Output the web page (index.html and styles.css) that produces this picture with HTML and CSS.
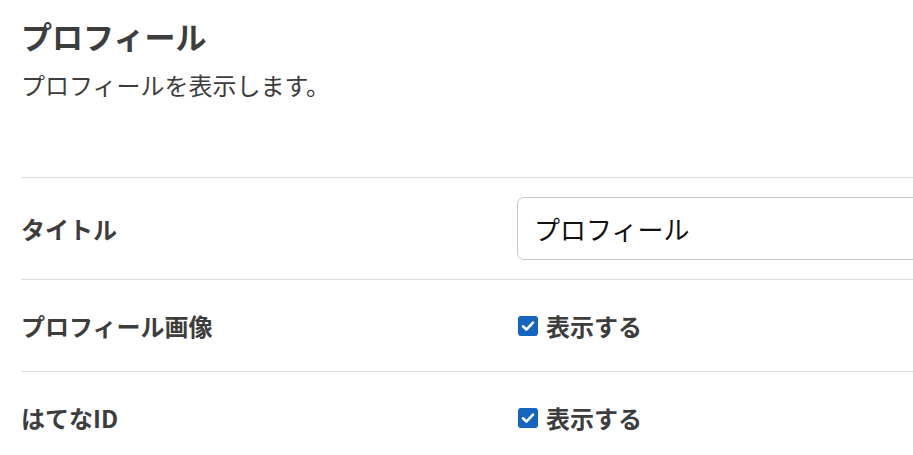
FILE: index.html
```html
<!DOCTYPE html>
<html lang="ja">
<head>
    <meta charset="UTF-8">
    <meta name="viewport" content="width=device-width, initial-scale=1.0">
    <title>プロフィール</title>
    <link rel="stylesheet" href="styles.css">
</head>
<body>
    <div class="panel">
        <h1 class="panel-title">プロフィール</h1>
        <p class="panel-desc">プロフィールを表示します。</p>

        <div class="settings">
            <div class="setting-row setting-row-input">
                <div class="setting-label">タイトル</div>
                <div class="setting-control">
                    <input class="text-input" type="text" value="プロフィール">
                </div>
            </div>
            <div class="setting-row">
                <div class="setting-label">プロフィール画像</div>
                <div class="setting-control">
                    <label class="check">
                        <span class="check-box">
                            <svg viewBox="0 0 20 20" width="20" height="20"><path d="M5 10.3 L8.4 13.6 L15 6.6" fill="none" stroke="#fff" stroke-width="2.6" stroke-linecap="round" stroke-linejoin="round"/></svg>
                        </span>
                        <span class="check-text">表示する</span>
                    </label>
                </div>
            </div>
            <div class="setting-row">
                <div class="setting-label">はてなID</div>
                <div class="setting-control">
                    <label class="check">
                        <span class="check-box">
                            <svg viewBox="0 0 20 20" width="20" height="20"><path d="M5 10.3 L8.4 13.6 L15 6.6" fill="none" stroke="#fff" stroke-width="2.6" stroke-linecap="round" stroke-linejoin="round"/></svg>
                        </span>
                        <span class="check-text">表示する</span>
                    </label>
                </div>
            </div>
        </div>
    </div>
</body>
</html>
```

FILE: styles.css
```css
* {
    margin: 0;
    padding: 0;
    box-sizing: border-box;
}

body {
    font-family: "Noto Sans CJK JP", "Noto Sans", sans-serif;
    background: #fff;
    color: #3d3d3d;
    overflow: hidden;
}

.panel {
    width: 1000px;
    padding: 14px 0 0 21px;
}

.panel-title {
    font-size: 31px;
    font-weight: 700;
    line-height: 44px;
}

.panel-desc {
    font-size: 24px;
    line-height: 34px;
    margin-top: 10px;
}

.settings {
    margin-top: 75px;
}

.setting-row {
    display: grid;
    grid-template-columns: 496px 1fr;
    align-items: center;
    min-height: 92px;
    border-top: 1px solid #dcdcdc;
}

.setting-row-input {
    padding: 19px 0;
}

.setting-label {
    font-size: 24px;
    font-weight: 700;
}

.text-input {
    display: block;
    width: 100%;
    height: 63px;
    padding: 0 16px;
    font-family: inherit;
    font-size: 26px;
    color: #111;
    border: 1px solid #c3c8ce;
    border-radius: 7px;
    outline: none;
}

.check {
    display: flex;
    align-items: center;
    gap: 8px;
    margin-left: 1px;
}

.check-box {
    width: 20px;
    height: 20px;
    border-radius: 3px;
    background: #1565c0;
    display: flex;
}

.check-text {
    font-size: 24px;
    font-weight: 700;
}
```
